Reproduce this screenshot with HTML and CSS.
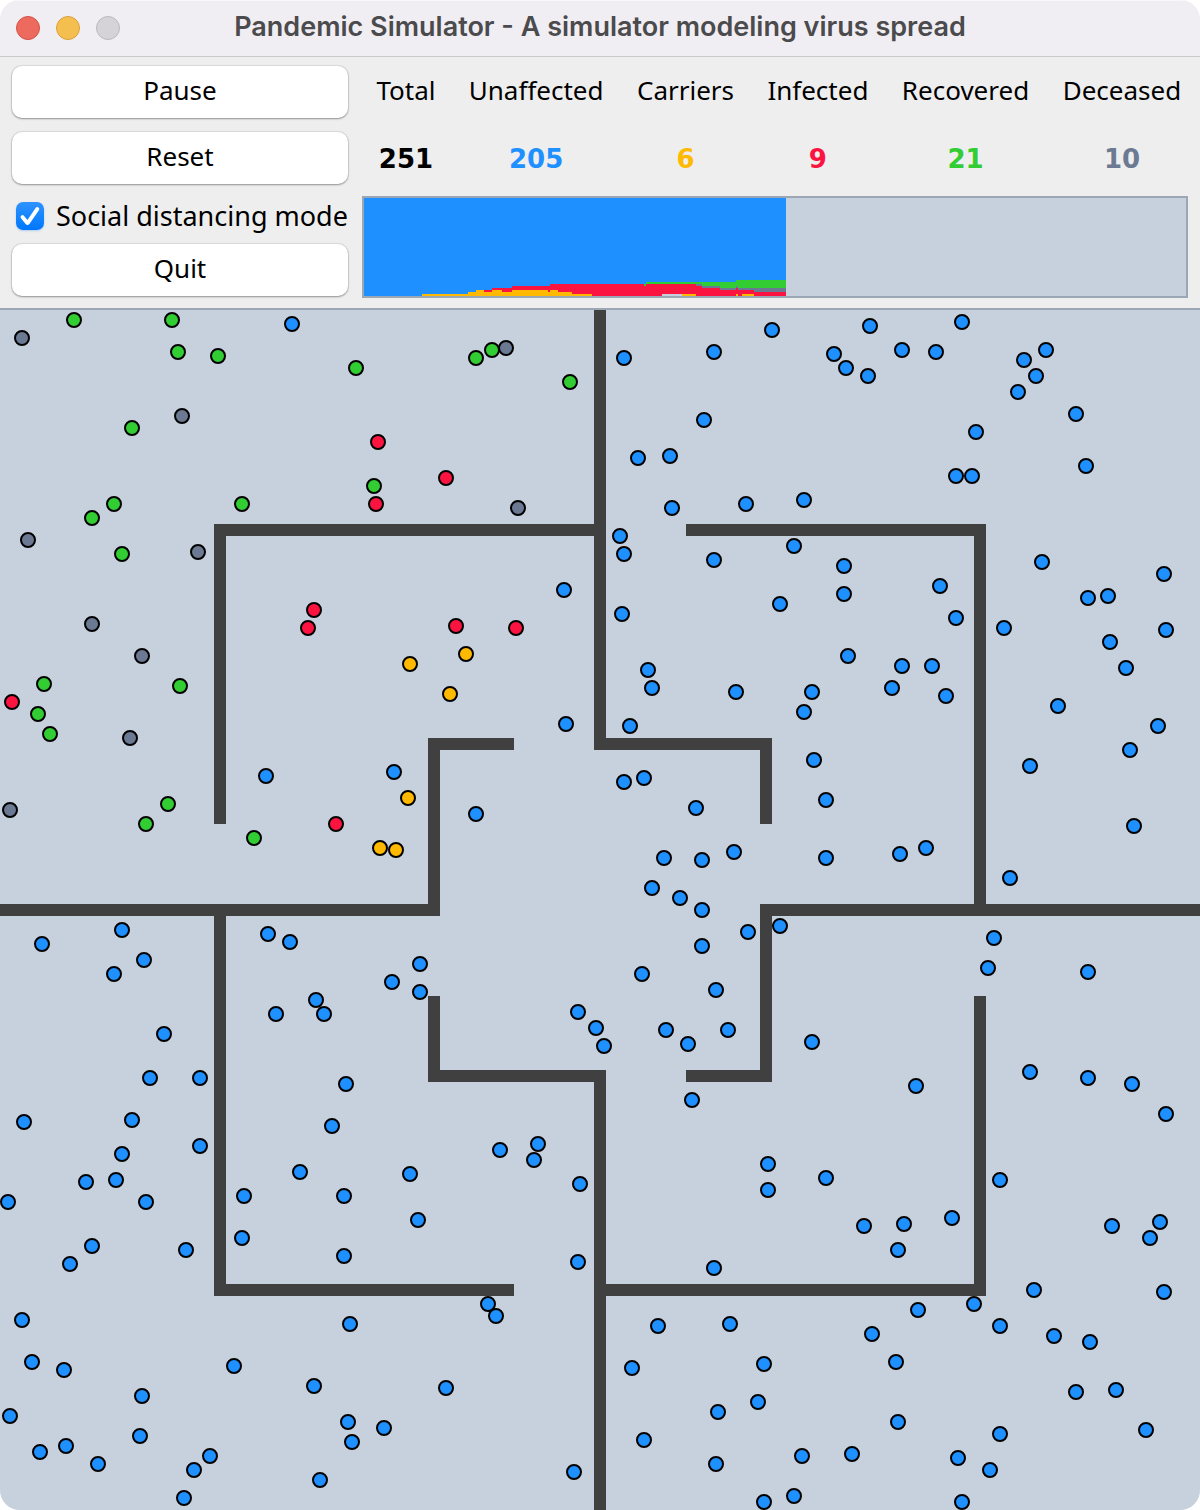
FILE: index.html
```html
<!DOCTYPE html>
<html lang="en">
<head>
<meta charset="utf-8">
<title>Pandemic Simulator</title>
<link rel="stylesheet" href="styles.css">
</head>
<body>
<main class="window">
  <header class="titlebar">
    <div class="lights">
      <button class="light close" type="button" aria-label="Close"></button>
      <button class="light minimize" type="button" aria-label="Minimize"></button>
      <button class="light zoom" type="button" aria-label="Zoom" disabled></button>
    </div>
    <h1 class="title">Pandemic Simulator - A simulator modeling virus spread</h1>
  </header>

  <section class="toolbar">
    <div class="controls">
      <button class="button" type="button">Pause</button>
      <button class="button" type="button">Reset</button>
      <label class="option"><input class="check" type="checkbox" checked>Social distancing mode</label>
      <button class="button" type="button">Quit</button>
    </div>
    <div class="summary">
      <table class="stats">
        <thead>
          <tr><th>Total</th><th>Unaffected</th><th>Carriers</th><th>Infected</th><th>Recovered</th><th>Deceased</th></tr>
        </thead>
        <tbody>
          <tr>
            <td>251</td>
            <td class="unaffected">205</td>
            <td class="carrier">6</td>
            <td class="infected">9</td>
            <td class="recovered">21</td>
            <td class="deceased">10</td>
          </tr>
        </tbody>
      </table>
      <svg class="chart" viewBox="0 0 822 98" preserveAspectRatio="none" shape-rendering="crispEdges" role="img" aria-label="Population over time">
        <path class="unaffected" d="M0 0H422V98H0z"/>
        <path class="recovered" d="M280 98V86H282V84H372V82H422V98z"/>
        <path class="deceased" d="M332 98V86H338V88H356V90H372V88H374V90H422V98z"/>
        <path class="infected" d="M120 98V92H128V90H148V88H186V86H280V88H282V86H332V88H338V90H356V92H372V90H374V92H390V94H422V98z"/>
        <path class="carrier" d="M58 98V96H104V94H112V92H120V94H128V92H138V94H148V92H184V94H186V92H194V94H208V96H228V98zM318 98V96H332V98zM372 98V96H374V98zM378 98V96H390V98z"/>
        <path class="empty" d="M298 96H318V98H298z"/>
      </svg>
    </div>
  </section>

  <svg class="board" viewBox="0 310 1200 1200" role="img" aria-label="Simulation area">
    <defs>
      <path id="unaffected" d="M292 324h0M624 358h0M714 352h0M772 330h0M870 326h0M962 322h0M834 354h0M846 368h0M868 376h0M902 350h0M936 352h0M1024 360h0M1046 350h0M1036 376h0M1018 392h0M1076 414h0M976 432h0M1086 466h0M956 476h0M972 476h0M704 420h0M638 458h0M670 456h0M672 508h0M746 504h0M804 500h0
        M620 536h0M624 554h0M714 560h0M794 546h0M844 566h0M844 594h0M780 604h0M622 614h0M564 590h0M940 586h0M956 618h0M1004 628h0M1042 562h0M1088 598h0M1108 596h0M1164 574h0M1166 630h0M1110 642h0M1126 668h0M848 656h0M902 666h0M932 666h0M892 688h0M946 696h0M648 670h0M652 688h0M736 692h0M812 692h0M804 712h0M630 726h0M566 724h0M1058 706h0M1158 726h0M1130 750h0M1030 766h0M814 760h0
        M266 776h0M394 772h0M476 814h0M624 782h0M644 778h0M696 808h0M826 800h0M1134 826h0M664 858h0M702 860h0M734 852h0M826 858h0M900 854h0M926 848h0M1010 878h0M652 888h0M680 898h0M702 910h0M702 946h0M748 932h0M780 926h0M994 938h0M988 968h0M1088 972h0M642 974h0M716 990h0
        M42 944h0M122 930h0M144 960h0M114 974h0M268 934h0M290 942h0M420 964h0M392 982h0M420 992h0M316 1000h0M324 1014h0M276 1014h0M164 1034h0M150 1078h0M200 1078h0M346 1084h0M24 1122h0M132 1120h0M332 1126h0M122 1154h0M200 1146h0M86 1182h0M116 1180h0M8 1202h0M146 1202h0M300 1172h0M244 1196h0M344 1196h0M410 1174h0M418 1220h0M242 1238h0M186 1250h0M92 1246h0M70 1264h0M344 1256h0
        M578 1012h0M596 1028h0M604 1046h0M666 1030h0M688 1044h0M728 1030h0M812 1042h0M692 1100h0M916 1086h0M1030 1072h0M1088 1078h0M1132 1084h0M1166 1114h0M500 1150h0M538 1144h0M534 1160h0M580 1184h0M768 1164h0M768 1190h0M826 1178h0M1000 1180h0M864 1226h0M904 1224h0M952 1218h0M898 1250h0M1112 1226h0M1160 1222h0M1150 1238h0M578 1262h0M714 1268h0M1034 1290h0M1164 1292h0
        M22 1320h0M32 1362h0M64 1370h0M10 1416h0M142 1396h0M140 1436h0M66 1446h0M40 1452h0M98 1464h0M210 1456h0M194 1470h0M184 1498h0M234 1366h0M350 1324h0M314 1386h0M348 1422h0M352 1442h0M384 1428h0M320 1480h0M446 1388h0M488 1304h0M496 1316h0M574 1472h0
        M658 1326h0M730 1324h0M632 1368h0M764 1364h0M758 1402h0M718 1412h0M644 1440h0M716 1464h0M764 1502h0M794 1496h0M802 1456h0M852 1454h0M872 1334h0M896 1362h0M898 1422h0M918 1310h0M974 1304h0M1000 1326h0M1054 1336h0M1090 1342h0M1076 1392h0M1116 1390h0M1146 1430h0M1000 1434h0M958 1458h0M990 1470h0M962 1502h0"/>
      <path id="carrier" d="M410 664h0M466 654h0M450 694h0M408 798h0M380 848h0M396 850h0"/>
      <path id="infected" d="M378 442h0M446 478h0M376 504h0M314 610h0M308 628h0M456 626h0M516 628h0M12 702h0M336 824h0"/>
      <path id="recovered" d="M74 320h0M172 320h0M178 352h0M218 356h0M356 368h0M476 358h0M492 350h0M570 382h0M132 428h0M374 486h0M242 504h0M114 504h0M92 518h0M122 554h0M44 684h0M38 714h0M50 734h0M180 686h0M168 804h0M146 824h0M254 838h0"/>
      <path id="deceased" d="M22 338h0M506 348h0M182 416h0M518 508h0M28 540h0M198 552h0M92 624h0M142 656h0M130 738h0M10 810h0"/>
    </defs>
    <path class="walls" d="M600 310V744H772M766 738V824M220 824V530H606M0 910H434V744H514M686 530H980V910M1200 910H766V1076H686M980 996V1290H600M600 1510V1076H434V996M220 910V1290H514"/>
    <g class="people outline">
      <use href="#unaffected"/><use href="#carrier"/><use href="#infected"/><use href="#recovered"/><use href="#deceased"/>
    </g>
    <g class="people">
      <use class="unaffected" href="#unaffected"/>
      <use class="carrier" href="#carrier"/>
      <use class="infected" href="#infected"/>
      <use class="recovered" href="#recovered"/>
      <use class="deceased" href="#deceased"/>
    </g>
  </svg>
</main>
</body>
</html>
```
FILE: styles.css
```css
* {
  box-sizing: border-box;
}

body {
  margin: 0;
  background: #fff;
  color: #000;
  font: 26px/32px "Noto Sans", "Open Sans", sans-serif;
}

.window {
  overflow: hidden;
  border-radius: 20px;
  background: #eee;
}

.titlebar {
  display: grid;
  grid-template-columns: 120px 1fr 120px;
  align-items: center;
  height: 57px;
  padding: 0 16px 2px;
  border-top: 1px solid #f8f7fa;
  border-bottom: 1px solid #c9c8cb;
  background: #f0eef3;
}

.lights {
  display: flex;
  gap: 16px;
}

.light {
  width: 24px;
  height: 24px;
  padding: 0;
  border: 1px solid;
  border-radius: 50%;
}

.close {
  border-color: #d35048;
  background: #ed6a5e;
}

.minimize {
  border-color: #d6a13d;
  background: #f5bf4f;
}

.zoom {
  border-color: #b9b8bb;
  background: #d5d3d8;
}

.title {
  margin: 0;
  padding-bottom: 2px;
  color: #4b4a4d;
  font: 600 27px/32px Inter, sans-serif;
  text-align: center;
  white-space: nowrap;
}

.toolbar {
  display: grid;
  grid-template-columns: 336px 1fr;
  gap: 14px;
  padding: 9px 12px 12px;
  border-bottom: 2px solid #9ba7b5;
}

.controls {
  display: flex;
  flex-direction: column;
  gap: 14px;
}

.button {
  height: 52px;
  padding: 0 0 4px;
  border: 0;
  border-radius: 10px;
  background: #fff;
  box-shadow: 0 0 1px 1px #00000014, 0 1px 2px #00000055;
  color: inherit;
  font: inherit;
}

.option {
  display: flex;
  align-items: center;
  gap: 12px;
  height: 28px;
  margin-top: 4px;
  padding-left: 4px;
  font-size: 27px;
  white-space: nowrap;
}

.check {
  appearance: none;
  flex: none;
  display: grid;
  width: 28px;
  height: 28px;
  margin: 0;
  border-radius: 7px;
  background: linear-gradient(#2f93ff, #0077fe);
  box-shadow: 0 1px 2px #0070ff40;
}

.check::before {
  content: "";
  background: #fff;
  clip-path: path("M4.8 16Q3.8 14.4 5.4 13.4Q7 12.6 8.1 14L11.4 18L19.6 6.1Q20.8 4.5 22.5 5.5Q24 6.6 22.9 8.2L13.4 22Q11.6 24.2 9.6 22z");
}

.stats {
  width: calc(100% + 12px);
  margin: 0 -10px 0 -2px;
  border-spacing: 0;
}

.stats th,
.stats td {
  padding: 0 16px;
  text-align: center;
}

.stats th {
  height: 48px;
  font-weight: 400;
}

.stats td {
  height: 82px;
  padding-top: 8px;
  font: bold 26px/32px "DejaVu Sans", sans-serif;
}

.chart {
  display: block;
  width: 100%;
  height: 102px;
  margin-bottom: -2px;
  border: 2px solid #9ba7b5;
  background: #c7d1dd;
}

.unaffected { color: #1e90ff; }
.carrier { color: #ffb900; }
.infected { color: #fc1441; }
.recovered { color: #32cd32; }
.deceased { color: #6b7a92; }
.empty { color: #c7d1dd; }

.chart path {
  fill: currentColor;
}

.board {
  display: block;
  width: 100%;
  background: #c7d1dd;
}

.walls {
  fill: none;
  stroke: #404040;
  stroke-width: 12;
}

.people {
  stroke-linecap: round;
  stroke-width: 12;
}

.people use {
  stroke: currentColor;
}

.outline {
  color: #000;
  stroke-width: 16;
}
```
